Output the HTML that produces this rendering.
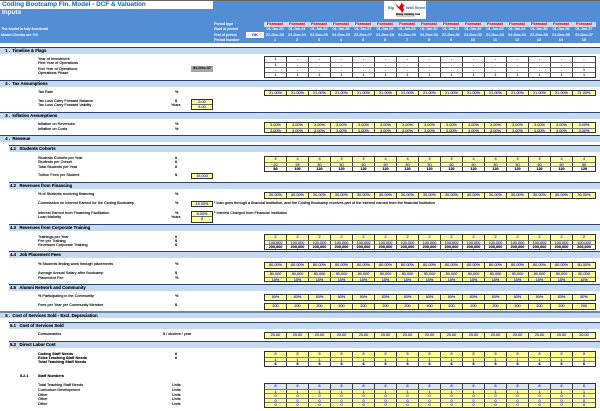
<!DOCTYPE html>
<html><head><meta charset="utf-8"><style>
html,body{margin:0;padding:0;background:#fff}
body{position:relative;width:600px;height:411px;overflow:hidden;font-family:"Liberation Sans",sans-serif;font-size:3.8px;line-height:5px;color:#000;filter:blur(.3px);-webkit-text-stroke:.12px currentColor}
.a{position:absolute;white-space:nowrap}
.l{position:absolute;left:38px;white-space:nowrap}
.u{position:absolute;left:175px;white-space:nowrap}
.b{font-weight:bold}
.s{position:absolute;left:0;width:600px;height:7px;box-sizing:border-box;background:#c5d9f1;border-top:1px solid #2b4668;font-weight:bold;font-size:4.3px;line-height:6.5px;padding-left:4px;white-space:pre}
.t{left:9px;width:591px;padding-left:1px}
.g{position:absolute;left:264px;width:332px;box-sizing:border-box;border:1px solid #333}
.g>div{display:flex;height:4.5px;line-height:4.5px;background:#ffff99;color:#2222ee;box-sizing:border-box}
.g>div+div{border-top:1px solid #777}
.g>div.w{background:#fff;color:#000}
.g>div.f{height:5px;line-height:5px;background:#fff;color:#333}
.g>div.f+div.f{border-top:1px solid #666}
.g>div.p{background:#dce6f1}
.g i{font-style:normal;flex:0 0 22px;box-sizing:border-box;border-left:1px solid #444;text-align:center;overflow:hidden;white-space:nowrap}
.g i:first-child{border-left:0;flex-basis:21px}
.g i:last-child{flex:1 1 auto}
.h{position:absolute;left:264px;width:332px;display:flex;height:5px;line-height:5px;color:#fff}
.h i{font-style:normal;flex:0 0 22px;text-align:center;white-space:nowrap}
.h i:last-child{flex:1 1 auto}
.pt{background:#c5d9f1;color:#f00;font-weight:bold}
.k{position:absolute;left:191px;width:22px;box-sizing:border-box;border:1px solid #333;background:#ffff99;color:#2222ee;text-align:center}
.k div{height:4px;line-height:4px}
.k div+div{border-top:1px solid #666;height:4.5px}
</style></head><body>
<div class="a" style="left:0;top:0;width:600px;height:43px;background:#538dd5;border-top:1px solid #666;box-sizing:border-box"></div>
<div class="a" style="left:0;top:1px;width:213px;height:8px;background:#fff"></div>
<div class="a b" style="left:2px;top:1px;font-size:6.4px;line-height:8px;color:#1f78c8">Coding Bootcamp Fin. Model - DCF &amp; Valuation</div>
<div class="a b" style="left:2px;top:9px;font-size:6.4px;line-height:8px;color:#e6eefa">Inputs</div>
<div class="a" style="left:1px;top:27px;color:#fff">The Model is fully functional</div>
<div class="a" style="left:1px;top:32.5px;color:#fff">Model Checks are OK</div>
<div class="a" style="left:214px;top:22px;color:#fff">Period type</div>
<div class="a" style="left:214px;top:27px;color:#fff">Start of period</div>
<div class="a" style="left:214px;top:32.5px;color:#fff">End of period</div>
<div class="a" style="left:214px;top:37.5px;color:#fff">Period Number</div>
<div class="a b" style="left:246px;top:32px;width:18px;height:6px;line-height:6px;background:#fff;color:#2222dd;text-align:center">OK</div>
<div class="h pt" style="top:22px"><i>Forecast</i><i>Forecast</i><i>Forecast</i><i>Forecast</i><i>Forecast</i><i>Forecast</i><i>Forecast</i><i>Forecast</i><i>Forecast</i><i>Forecast</i><i>Forecast</i><i>Forecast</i><i>Forecast</i><i>Forecast</i><i>Forecast</i></div>
<div class="h" style="top:27px"><i>01-Jan-23</i><i>01-Jan-24</i><i>01-Jan-25</i><i>01-Jan-26</i><i>01-Jan-27</i><i>01-Jan-28</i><i>01-Jan-29</i><i>01-Jan-30</i><i>01-Jan-31</i><i>01-Jan-32</i><i>01-Jan-33</i><i>01-Jan-34</i><i>01-Jan-35</i><i>01-Jan-36</i><i>01-Jan-37</i></div>
<div class="h" style="top:32.5px"><i>31-Dec-23</i><i>31-Dec-24</i><i>31-Dec-25</i><i>31-Dec-26</i><i>31-Dec-27</i><i>31-Dec-28</i><i>31-Dec-29</i><i>31-Dec-30</i><i>31-Dec-31</i><i>31-Dec-32</i><i>31-Dec-33</i><i>31-Dec-34</i><i>31-Dec-35</i><i>31-Dec-36</i><i>31-Dec-37</i></div>
<div class="h" style="top:37.5px"><i>1</i><i>2</i><i>3</i><i>4</i><i>5</i><i>6</i><i>7</i><i>8</i><i>9</i><i>10</i><i>11</i><i>12</i><i>13</i><i>14</i><i>15</i></div>
<div class="a" style="left:384px;top:1px;width:42px;height:18px;background:#fff"></div>
<div class="a b" style="left:388px;top:6px;color:#4f81bd">Big</div>
<div class="a b" style="left:406px;top:6px;color:#4f81bd">Wall Street</div>
<svg class="a" style="left:394px;top:2px" width="14" height="12" viewBox="0 0 14 12"><path d="M1 1 L5 5 L8 0.5 L9 3 L11 3.5 L9 5 L10 8 L8 11 L6.5 8 L3.5 5.5 Z" fill="#e3000f"/></svg>
<div class="a" style="left:396px;top:13px;width:19px;height:3.5px;line-height:3.5px;background:#ccc;color:#000;font-size:2.4px;text-align:center">Money. Certainty. Deal</div>

<div class="s" style="top:47px"> 1 .  Timeline &amp; Flags</div>
<div class="l" style="top:56.5px">Year of Investment</div>
<div class="l" style="top:61px">First Year of Operations</div>
<div class="l" style="top:66.8px">End Year of Operations</div>
<div class="l" style="top:71.2px">Operations Phase</div>
<div class="a b" style="left:191px;top:66px;width:22px;height:5.5px;line-height:5.5px;background:#a6a6a6;text-align:center;color:#222">31-Dec-37</div>
<div class="g" style="top:56px"><div class="f"><i>1</i><i>-</i><i>-</i><i>-</i><i>-</i><i>-</i><i>-</i><i>-</i><i>-</i><i>-</i><i>-</i><i>-</i><i>-</i><i>-</i><i>-</i></div><div class="f"><i>1</i><i>-</i><i>-</i><i>-</i><i>-</i><i>-</i><i>-</i><i>-</i><i>-</i><i>-</i><i>-</i><i>-</i><i>-</i><i>-</i><i>-</i></div><div class="f"><i>-</i><i>-</i><i>-</i><i>-</i><i>-</i><i>-</i><i>-</i><i>-</i><i>-</i><i>-</i><i>-</i><i>-</i><i>-</i><i>-</i><i>1</i></div><div class="f"><i>1</i><i>1</i><i>1</i><i>1</i><i>1</i><i>1</i><i>1</i><i>1</i><i>1</i><i>1</i><i>1</i><i>1</i><i>1</i><i>1</i><i>1</i></div></div>

<div class="s" style="top:79.5px"> 2 .  Tax Assumptions</div>
<div class="l" style="top:89.5px">Tax Rate</div><div class="u" style="top:89.5px">%</div>
<div class="g" style="top:89.5px"><div><i>21.00%</i><i>21.00%</i><i>21.00%</i><i>21.00%</i><i>21.00%</i><i>21.00%</i><i>21.00%</i><i>21.00%</i><i>21.00%</i><i>21.00%</i><i>21.00%</i><i>21.00%</i><i>21.00%</i><i>21.00%</i><i>21.00%</i></div></div>
<div class="l" style="top:98.5px">Tax Loss Carry Forward Balance</div><div class="u" style="top:98.5px">$</div>
<div class="l" style="top:103.2px">Tax Loss Carry Forward Validity</div><div class="a" style="left:171px;top:103.2px">Years</div>
<div class="k" style="top:98.5px"><div>0.00</div><div>5.00</div></div>

<div class="s" style="top:112px"> 3 .  Inflation Assumptions</div>
<div class="l" style="top:122px">Inflation on Revenues</div><div class="u" style="top:122px">%</div>
<div class="l" style="top:126.5px">Inflation on Costs</div><div class="u" style="top:126.5px">%</div>
<div class="g" style="top:122px"><div><i>3.00%</i><i>3.00%</i><i>3.00%</i><i>3.00%</i><i>3.00%</i><i>3.00%</i><i>3.00%</i><i>3.00%</i><i>3.00%</i><i>3.00%</i><i>3.00%</i><i>3.00%</i><i>3.00%</i><i>3.00%</i><i>3.00%</i></div><div><i>3.00%</i><i>3.00%</i><i>3.00%</i><i>3.00%</i><i>3.00%</i><i>3.00%</i><i>3.00%</i><i>3.00%</i><i>3.00%</i><i>3.00%</i><i>3.00%</i><i>3.00%</i><i>3.00%</i><i>3.00%</i><i>3.00%</i></div></div>

<div class="s" style="top:135px"> 4 .  Revenue</div>
<div class="s t" style="top:145px">4.1   Students Cohorts</div>
<div class="l" style="top:155.5px">Students Cohorts per Year</div><div class="u" style="top:155.5px">#</div>
<div class="l" style="top:159.8px">Students per Cohort</div><div class="u" style="top:159.8px">#</div>
<div class="l" style="top:164.5px">Total Students per Year</div><div class="u" style="top:164.5px">#</div>
<div class="g" style="top:156px"><div><i>4</i><i>4</i><i>4</i><i>4</i><i>4</i><i>4</i><i>4</i><i>4</i><i>4</i><i>4</i><i>4</i><i>4</i><i>4</i><i>4</i><i>4</i></div><div><i>20</i><i>25</i><i>30</i><i>30</i><i>30</i><i>30</i><i>30</i><i>30</i><i>30</i><i>30</i><i>30</i><i>30</i><i>30</i><i>30</i><i>30</i></div><div class="w b"><i>80</i><i>100</i><i>120</i><i>120</i><i>120</i><i>120</i><i>120</i><i>120</i><i>120</i><i>120</i><i>120</i><i>120</i><i>120</i><i>120</i><i>120</i></div></div>
<div class="l" style="top:173px">Tuition Fees per Student</div><div class="u" style="top:173px">$</div>
<div class="k" style="top:173px"><div>15,000</div></div>

<div class="s t" style="top:182px">4.2   Revenues from Financing</div>
<div class="l" style="top:192px">% of Students receiving financing</div><div class="u" style="top:192px">%</div>
<div class="g" style="top:192px"><div><i>30.00%</i><i>30.00%</i><i>30.00%</i><i>30.00%</i><i>30.00%</i><i>30.00%</i><i>30.00%</i><i>30.00%</i><i>30.00%</i><i>30.00%</i><i>30.00%</i><i>30.00%</i><i>30.00%</i><i>30.00%</i><i>30.00%</i></div></div>
<div class="l" style="top:200.5px">Commission on Interest Earned for the Coding Bootcamp</div><div class="u" style="top:200.5px">%</div>
<div class="k" style="top:201px"><div>15.00%</div></div>
<div class="a" style="left:214px;top:200.5px">* loan goes through a financial institution, and the Coding Bootcamp receives part of the interest earned from the financial institution</div>
<div class="l" style="top:210.5px">Interest Earned from Financing Facilitation</div><div class="u" style="top:210.5px">%</div>
<div class="l" style="top:215px">Loan Maturity</div><div class="a" style="left:171px;top:215px">Years</div>
<div class="k" style="top:211px"><div>8.00%</div><div>3</div></div>
<div class="a" style="left:214px;top:210.5px">* Interest Charged from Financial Institution</div>

<div class="s t" style="top:223.5px">4.3   Revenues from Corporate Training</div>
<div class="l" style="top:234.5px">Trainings per Year</div><div class="u" style="top:234.5px">#</div>
<div class="l" style="top:238.5px">Fee per Training</div><div class="u" style="top:238.5px">$</div>
<div class="l" style="top:243px">Revenues Corporate Training</div><div class="u" style="top:243px">$</div>
<div class="g" style="top:234px"><div><i>2</i><i>2</i><i>2</i><i>2</i><i>2</i><i>2</i><i>2</i><i>2</i><i>2</i><i>2</i><i>2</i><i>2</i><i>2</i><i>2</i><i>2</i></div><div><i>100,000</i><i>100,000</i><i>100,000</i><i>100,000</i><i>100,000</i><i>100,000</i><i>100,000</i><i>100,000</i><i>100,000</i><i>100,000</i><i>100,000</i><i>100,000</i><i>100,000</i><i>100,000</i><i>100,000</i></div><div class="w b"><i>200,000</i><i>200,000</i><i>200,000</i><i>200,000</i><i>200,000</i><i>200,000</i><i>200,000</i><i>200,000</i><i>200,000</i><i>200,000</i><i>200,000</i><i>200,000</i><i>200,000</i><i>200,000</i><i>200,000</i></div></div>

<div class="s t" style="top:251px">4.4   Job Placement Fees</div>
<div class="l" style="top:262px">% Students finding work through placements</div><div class="u" style="top:262px">%</div>
<div class="g" style="top:262px"><div><i>80.00%</i><i>80.00%</i><i>80.00%</i><i>80.00%</i><i>80.00%</i><i>80.00%</i><i>80.00%</i><i>80.00%</i><i>80.00%</i><i>80.00%</i><i>80.00%</i><i>80.00%</i><i>80.00%</i><i>80.00%</i><i>80.00%</i></div></div>
<div class="l" style="top:271px">Average Annual Salary after Bootcamp</div><div class="u" style="top:271px">$</div>
<div class="l" style="top:275.5px">Placement Fee</div><div class="u" style="top:275.5px">%</div>
<div class="g" style="top:271px"><div><i>80,000</i><i>80,000</i><i>80,000</i><i>80,000</i><i>80,000</i><i>80,000</i><i>80,000</i><i>80,000</i><i>80,000</i><i>80,000</i><i>80,000</i><i>80,000</i><i>80,000</i><i>80,000</i><i>80,000</i></div><div><i>15%</i><i>15%</i><i>15%</i><i>15%</i><i>15%</i><i>15%</i><i>15%</i><i>15%</i><i>15%</i><i>15%</i><i>15%</i><i>15%</i><i>15%</i><i>15%</i><i>15%</i></div></div>

<div class="s t" style="top:284px">4.5   Alumni Network and Community</div>
<div class="l" style="top:294px">% Participating in the Community</div><div class="u" style="top:294px">%</div>
<div class="g" style="top:294px"><div><i>60%</i><i>60%</i><i>60%</i><i>60%</i><i>60%</i><i>60%</i><i>60%</i><i>60%</i><i>60%</i><i>60%</i><i>60%</i><i>60%</i><i>60%</i><i>60%</i><i>60%</i></div></div>
<div class="l" style="top:303px">Fees per Year per Community Member</div><div class="u" style="top:303px">$</div>
<div class="g" style="top:303px"><div><i>200</i><i>200</i><i>200</i><i>200</i><i>200</i><i>200</i><i>200</i><i>200</i><i>200</i><i>200</i><i>200</i><i>200</i><i>200</i><i>200</i><i>200</i></div></div>

<div class="s" style="top:311px;border-top:2px solid #6f86a8"> 5 .  Cost of Services Sold - Excl. Depreciation</div>
<div class="s t" style="top:321.5px">5.1   Cost of Services Sold</div>
<div class="l" style="top:332px">Consumables</div><div class="a" style="left:163px;top:332px">$ / student / year</div>
<div class="g" style="top:332px"><div><i>20.00</i><i>20.00</i><i>20.00</i><i>20.00</i><i>20.00</i><i>20.00</i><i>20.00</i><i>20.00</i><i>20.00</i><i>20.00</i><i>20.00</i><i>20.00</i><i>20.00</i><i>20.00</i><i>20.00</i></div></div>
<div class="s t" style="top:341px">5.2   Direct Labor Cost</div>
<div class="l b" style="top:351.5px">Coding Staff Needs</div><div class="u b" style="top:351.5px">#</div>
<div class="l b" style="top:355.5px">Extra Teaching Staff Needs</div><div class="u b" style="top:355.5px">#</div>
<div class="l b" style="top:360px">Total Teaching Staff Needs</div>
<div class="g" style="top:351px"><div><i>5</i><i>5</i><i>5</i><i>5</i><i>5</i><i>5</i><i>5</i><i>5</i><i>5</i><i>5</i><i>5</i><i>5</i><i>5</i><i>5</i><i>5</i></div><div><i>1</i><i>1</i><i>1</i><i>1</i><i>1</i><i>1</i><i>1</i><i>1</i><i>1</i><i>1</i><i>1</i><i>1</i><i>1</i><i>1</i><i>1</i></div><div class="w b"><i>6</i><i>6</i><i>6</i><i>6</i><i>6</i><i>6</i><i>6</i><i>6</i><i>6</i><i>6</i><i>6</i><i>6</i><i>6</i><i>6</i><i>6</i></div></div>
<div class="a b" style="left:20px;top:373.5px">5.2.1</div><div class="l b" style="top:373.5px">Staff Numbers</div>
<div class="l" style="top:383px">Total Teaching Staff Needs</div><div class="a" style="left:172px;top:383px">Units</div>
<div class="l" style="top:387.5px">Curriculum Development</div><div class="a" style="left:172px;top:387.5px">Units</div>
<div class="l" style="top:392.5px">Other</div><div class="a" style="left:172px;top:392.5px">Units</div>
<div class="l" style="top:397px">Other</div><div class="a" style="left:172px;top:397px">Units</div>
<div class="l" style="top:401.5px">Other</div><div class="a" style="left:172px;top:401.5px">Units</div>
<div class="g" style="top:383px"><div class="p"><i>6</i><i>6</i><i>6</i><i>6</i><i>6</i><i>6</i><i>6</i><i>6</i><i>6</i><i>6</i><i>6</i><i>6</i><i>6</i><i>6</i><i>6</i></div><div><i>1</i><i>1</i><i>1</i><i>1</i><i>1</i><i>1</i><i>1</i><i>1</i><i>1</i><i>1</i><i>1</i><i>1</i><i>1</i><i>1</i><i>1</i></div><div><i>0</i><i>0</i><i>0</i><i>0</i><i>0</i><i>0</i><i>0</i><i>0</i><i>0</i><i>0</i><i>0</i><i>0</i><i>0</i><i>0</i><i>0</i></div><div><i>0</i><i>0</i><i>0</i><i>0</i><i>0</i><i>0</i><i>0</i><i>0</i><i>0</i><i>0</i><i>0</i><i>0</i><i>0</i><i>0</i><i>0</i></div><div><i>0</i><i>0</i><i>0</i><i>0</i><i>0</i><i>0</i><i>0</i><i>0</i><i>0</i><i>0</i><i>0</i><i>0</i><i>0</i><i>0</i><i>0</i></div></div>
</body></html>
